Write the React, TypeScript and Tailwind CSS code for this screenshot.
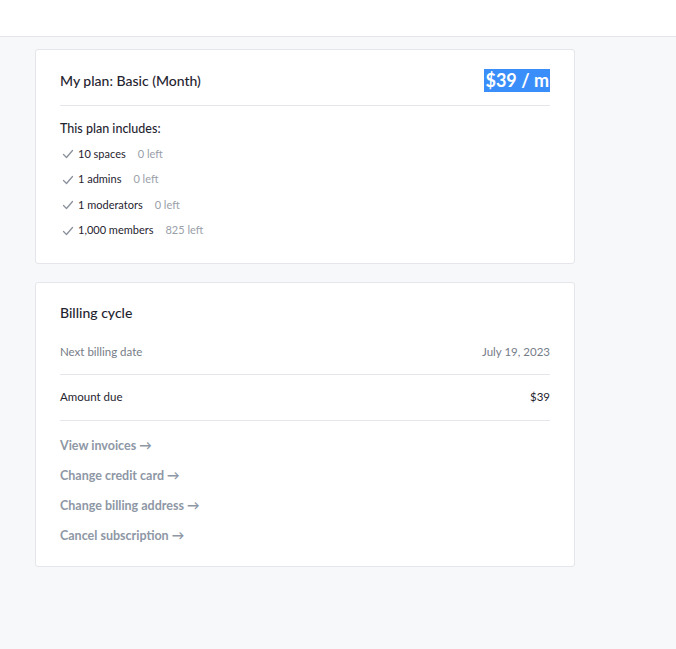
const FONT = "font-['Lato',_'Noto_Sans',_sans-serif]";

const items: [string, string][] = [
  ["10 spaces", "0 left"],
  ["1 admins", "0 left"],
  ["1 moderators", "0 left"],
  ["1,000 members", "825 left"],
];

const links = ["View invoices", "Change credit card", "Change billing address", "Cancel subscription"];

function Check() {
  return (
    <svg width="12" height="12" viewBox="0 0 12 12" fill="none" className="shrink-0">
      <path d="M1.5 6.5 L4.5 9.5 L10.5 2.5" stroke="#8a919c" strokeWidth="1.3" strokeLinecap="round" strokeLinejoin="round" />
    </svg>
  );
}

export default function App() {
  return (
    <div className={`${FONT} min-h-[649px] bg-[#f7f8fa] text-[#1f2430]`}>
      <div className="h-[37px] border-b border-[#e3e5ea] bg-white" />
      <div className="flex flex-col gap-[18px] px-[35px] pt-[12px]">
        <section className="w-[540px] rounded-[3px] border border-[#e4e6eb] bg-white px-[24px] pb-[24px]">
          <div className="flex h-[56px] items-center justify-between border-b border-[#e4e6eb] pt-[6px]">
            <h2 className="text-[14px] font-medium">My plan: Basic (Month)</h2>
            <span className="bg-[#3a8ef9] px-px text-[18px] leading-[23px] font-bold text-white">$39 / m</span>
          </div>
          <div className="pt-[15px] text-[12.5px] font-medium leading-[16px]">This plan includes:</div>
          <ul className="mt-[9px] flex flex-col gap-[9.5px]">
            {items.map(([label, left]) => (
              <li key={label} className="flex h-[16px] items-center text-[11px]">
                <span className="ml-[2px] mr-[4px]"><Check /></span>
                <span className="text-[#1f2430]">{label}</span>
                <span className="ml-[12px] text-[#9aa0a9]">{left}</span>
              </li>
            ))}
          </ul>
        </section>

        <section className="w-[540px] rounded-[3px] border border-[#e4e6eb] bg-white px-[24px] pb-[14px]">
          <h2 className="pt-[21px] text-[14px] font-medium leading-[18px]">Billing cycle</h2>
          <div className="mt-[9px] flex h-[44px] items-center justify-between border-b border-[#e4e6eb] text-[11.5px] text-[#767c88]">
            <span>Next billing date</span>
            <span>July 19, 2023</span>
          </div>
          <div className="flex h-[46px] items-center justify-between border-b border-[#e4e6eb] text-[11.5px] text-[#1f2430]">
            <span>Amount due</span>
            <span>$39</span>
          </div>
          <div className="flex flex-col pt-[11px]">
            {links.map((l) => (
              <a key={l} href="#" className="flex h-[30px] items-center text-[12.5px] font-bold text-[#8e97a5]">
                {l} →
              </a>
            ))}
          </div>
        </section>
      </div>
    </div>
  );
}
